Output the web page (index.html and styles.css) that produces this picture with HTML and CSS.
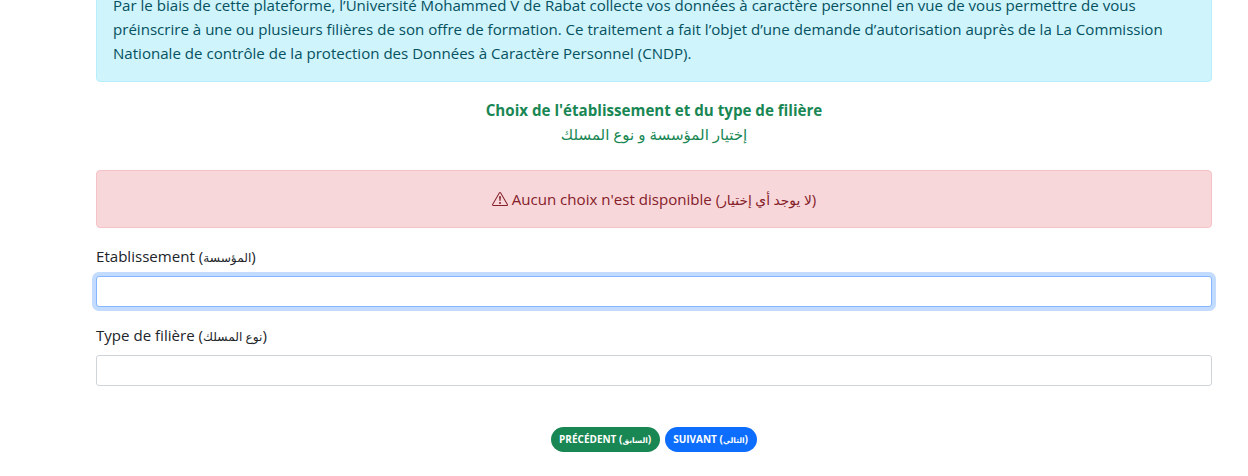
FILE: index.html
```html
<!DOCTYPE html>
<html lang="fr">
<head>
<meta charset="utf-8">
<title>Choix de l'établissement</title>
<link rel="stylesheet" href="styles.css">
</head>
<body>
<main class="page">
  <div class="alert alert-info">Par le biais de cette plateforme, l’Université Mohammed V de Rabat collecte vos données à caractère personnel en vue de vous permettre de vous préinscrire à une ou plusieurs filières de son offre de formation. Ce traitement a fait l’objet d’une demande d’autorisation auprès de la La Commission Nationale de contrôle de la protection des Données à Caractère Personnel (CNDP).</div>
  <div class="heading">
    <div class="heading-fr">Choix de l'établissement et du type de filière</div>
    <div class="heading-ar">إختيار المؤسسة و نوع المسلك</div>
  </div>
  <div class="alert alert-danger">
    <svg class="warn" viewBox="0 0 16 16" width="16" height="16" fill="currentColor" aria-hidden="true"><path d="M7.938 2.016A.13.13 0 0 1 8.002 2a.13.13 0 0 1 .063.016.146.146 0 0 1 .054.057l6.857 11.667c.036.06.035.124.002.183a.163.163 0 0 1-.054.06.116.116 0 0 1-.066.017H1.146a.115.115 0 0 1-.066-.017.163.163 0 0 1-.054-.06.176.176 0 0 1 .002-.183L7.884 2.073a.147.147 0 0 1 .054-.057zm1.044-.45a1.13 1.13 0 0 0-1.96 0L.165 13.233c-.457.778.091 1.767.98 1.767h13.713c.889 0 1.438-.99.98-1.767L8.982 1.566z"/><path d="M7.002 12a1 1 0 1 1 2 0 1 1 0 0 1-2 0zM7.1 5.995a.905.905 0 1 1 1.8 0l-.35 3.507a.552.552 0 0 1-1.1 0L7.1 5.995z"/></svg>
    Aucun choix n'est disponible (<span class="ar-msg">لا يوجد أي إختيار</span>)
  </div>
  <form class="form">
    <div class="field">
      <label class="label" for="etab">Etablissement (<span class="ar-label">المؤسسة</span>)</label>
      <input class="control control-focus" id="etab" type="text">
    </div>
    <div class="field">
      <label class="label" for="type">Type de filière (<span class="ar-label">نوع المسلك</span>)</label>
      <input class="control" id="type" type="text">
    </div>
    <div class="actions">
      <button class="btn btn-success" type="button">Précédent (<span class="ar-btn">السابق</span>)</button>
      <button class="btn btn-primary" type="button">Suivant (<span class="ar-btn">التالي</span>)</button>
    </div>
  </form>
</main>
</body>
</html>
```
FILE: styles.css
```css
* { box-sizing: border-box; }
html, body { margin: 0; height: 476px; overflow: hidden; background: #fff; }
body {
  font-family: "Open Sans", "DejaVu Sans", sans-serif;
  font-size: 15.08px;
  line-height: 24px;
  color: #212529;
}
.page { margin: -24px 36px 0 96px; }
.alert {
  border: 1px solid transparent;
  border-radius: 4px;
  padding: 16px;
}
.alert-info { background: #cff4fc; border-color: #b6effb; color: #055160; }
.alert-danger {
  background: #f8d7da;
  border-color: #f5c2c7;
  color: #842029;
  text-align: center;
  margin-top: 16px;
}
.warn { vertical-align: -2px; }
.ar-msg { font-size: 13.8px; line-height: 1; }
.ar-label { font-size: 12.2px; line-height: 1; }
.ar-btn { font-size: 7.5px; line-height: 1; }
.heading { text-align: center; color: #198754; margin-top: 16px; padding-bottom: 8px; }
.heading-fr { font-weight: 700; font-size: 15.15px; }
.form { margin-top: 16px; }
.field { margin-bottom: 16px; }
.label { display: block; margin-bottom: 8px; }
.control {
  display: block;
  width: 100%;
  height: 31px;
  border: 1px solid #ced4da;
  border-radius: 3px;
  background: #fff;
  padding: 4px 8px;
  outline: 0;
}
.control-focus { border-color: #86b7fe; box-shadow: 0 0 0 4px rgba(13, 110, 253, .25); }
.actions { display: flex; justify-content: center; gap: 5px; margin-top: 41px; }
.btn {
  border: 1px solid transparent;
  border-radius: 13px;
  height: 25px;
  padding: 0 8px 0 7px;
  color: #fff;
  font: 700 10px/23px "Open Sans", "DejaVu Sans", sans-serif;
  text-transform: uppercase;
}
.btn-success { background: #198754; }
.btn-primary { background: #0d6efd; }
```
